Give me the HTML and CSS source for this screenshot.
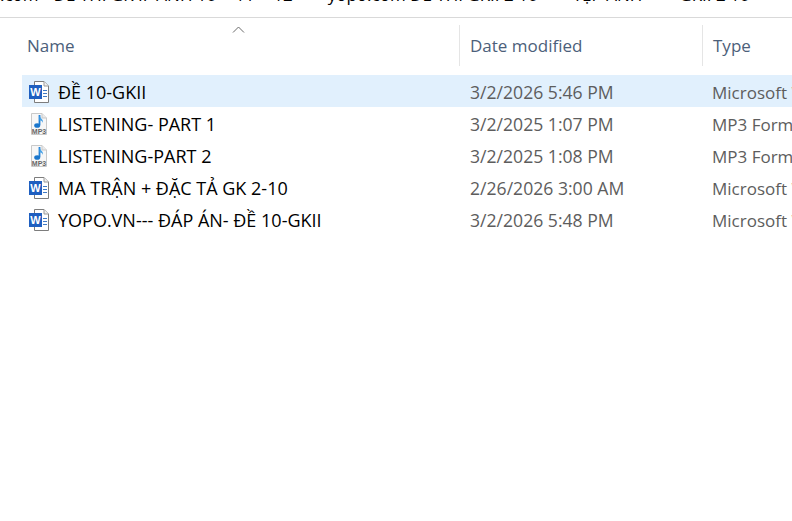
FILE: index.html
```html
<!DOCTYPE html>
<html>
<head>
    <title>File Explorer</title>
    <link rel="stylesheet" href="styles.css">
</head>
<body>
    <svg class="defs" width="0" height="0">
        <symbol id="icon-word" viewBox="0 0 22 24">
            <path d="M6.500 1.500H16L20.500 6V22.500H6.500Z" fill="#fff" stroke="#7d7d7d"/>
            <path d="M16 1.500V6H20.500" fill="#f0f0f0" stroke="#9a9a9a"/>
            <path d="M15 10.500H19M15 13.500H19M15 16.500H19" stroke="#3f79c4"/>
            <rect x="1" y="5" width="13" height="14" fill="#1f5fc0"/>
            <text x="7.500" y="16.200" class="word-letter">W</text>
        </symbol>
        <symbol id="icon-mp3" viewBox="0 0 22 24">
            <path d="M3.500 1.500H14L18.500 6V22.500H3.500Z" fill="#f7f7f7" stroke="#c9c9c9"/>
            <path d="M14 1.500V6H18.500" fill="#eaeaea" stroke="#c9c9c9"/>
            <path d="M11.500 3V13" stroke="#1f7fd6" stroke-width="1.800"/>
            <path d="M11.500 3.500C12.500 6.500 15.500 7 15 11C14.500 9 13 8.500 11.500 8.500Z" fill="#4aa3e6"/>
            <ellipse cx="9.200" cy="13.500" rx="3" ry="2.300" fill="#1a76cc"/>
            <text x="11" y="21.800" class="mp3-label">MP3</text>
        </symbol>
    </svg>

    <div class="crumbs">
        <span class="crumb-part">.com</span>
        <span class="crumb-part">ĐỀ THI GK II  ANH 10 -  11 -  12</span>
        <span class="crumb-part crumb-sep">›</span>
        <span class="crumb-part">yopo.com ĐỀ THI GKII 2 10</span>
        <span class="crumb-part crumb-sep">›</span>
        <span class="crumb-part">TỆP ANH</span>
        <span class="crumb-part part-last">GKII 2 10</span>
    </div>

    <div class="columns">
        <div class="col-head col-name">
            <svg class="sort-up" width="13" height="7" viewBox="0 0 13 7"><path d="M1 6.500L6.500 1L12 6.500" fill="none" stroke="#6b6b6b"/></svg>
            Name
        </div>
        <div class="col-head col-date">Date modified</div>
        <div class="col-head col-type">Type</div>
    </div>

    <div class="files">
        <div class="file-row selected">
            <div class="file-name"><svg class="file-icon"><use href="#icon-word"/></svg>ĐỀ 10-GKII</div>
            <div class="file-date">3/2/2026 5:46 PM</div>
            <div class="file-type">Microsoft Word Document</div>
        </div>
        <div class="file-row">
            <div class="file-name"><svg class="file-icon"><use href="#icon-mp3"/></svg>LISTENING- PART 1</div>
            <div class="file-date">3/2/2025 1:07 PM</div>
            <div class="file-type">MP3 Format Sound</div>
        </div>
        <div class="file-row">
            <div class="file-name"><svg class="file-icon"><use href="#icon-mp3"/></svg>LISTENING-PART 2</div>
            <div class="file-date">3/2/2025 1:08 PM</div>
            <div class="file-type">MP3 Format Sound</div>
        </div>
        <div class="file-row">
            <div class="file-name"><svg class="file-icon"><use href="#icon-word"/></svg>MA TRẬN + ĐẶC TẢ GK 2-10</div>
            <div class="file-date">2/26/2026 3:00 AM</div>
            <div class="file-type">Microsoft Word Document</div>
        </div>
        <div class="file-row">
            <div class="file-name"><svg class="file-icon"><use href="#icon-word"/></svg>YOPO.VN--- ĐÁP ÁN- ĐỀ 10-GKII</div>
            <div class="file-date">3/2/2026 5:48 PM</div>
            <div class="file-type">Microsoft Word Document</div>
        </div>
    </div>
</body>
</html>
```

FILE: styles.css
```css
/* Page */
html, body {
    height: 100%;
}

body {
    margin: 0;
    overflow: hidden;
    background-color: #fff;
    font-family: "Open Sans", "Noto Sans", sans-serif;
    font-size: 17px;
    color: #000;
}

.defs {
    position: absolute;
}

/* Address bar, only its lower edge is in view */
.crumbs {
    height: 17px;
    border-bottom: 1px solid #d9d9d9;
    overflow: hidden;
    display: flex;
    align-items: flex-end;
    gap: 15px;
}

.crumb-part {
    flex: none;
    margin-bottom: 10px;
    white-space: pre;
    line-height: 24px;
}

.crumb-sep {
    color: #777;
}

.part-last {
    margin-left: 22px;
}

/* Column headers */
.columns {
    display: grid;
    grid-template-columns: 459px 243px 1fr;
    height: 41px;
    margin-top: 7px;
}

.col-head {
    display: flex;
    align-items: center;
    color: #4c607a;
    white-space: nowrap;
    border-left: 1px solid #e5e5e5;
    padding-left: 10px;
}

.col-name {
    position: relative;
    padding-left: 27px;
    border-left: none;
}

.sort-up {
    position: absolute;
    left: 232px;
    top: 1px;
}

/* File rows */
.files {
    margin-top: 9px;
    padding-left: 22px;
}

.file-row {
    box-sizing: border-box;
    display: grid;
    grid-template-columns: 437px 243px 1fr;
    height: 32px;
    padding-top: 2px;
    align-items: center;
    white-space: nowrap;
    overflow: hidden;
}

.file-row.selected {
    background-color: #e1f0fd;
}

.file-name {
    display: flex;
    align-items: center;
    padding-left: 6px;
    font-size: 18px;
}

.file-icon {
    width: 22px;
    height: 24px;
    margin-right: 8px;
    flex: none;
}

.file-date {
    padding-left: 11px;
    color: #5d5d5d;
    font-size: 17.6px;
}

.file-type {
    padding-left: 10px;
    color: #5d5d5d;
}

/* Icon lettering */
.word-letter {
    font-family: "Liberation Sans", sans-serif;
    font-size: 11px;
    font-weight: bold;
    fill: #fff;
    text-anchor: middle;
}

.mp3-label {
    font-family: "Liberation Sans", sans-serif;
    font-size: 7px;
    font-weight: bold;
    fill: #666;
    text-anchor: middle;
}
```
